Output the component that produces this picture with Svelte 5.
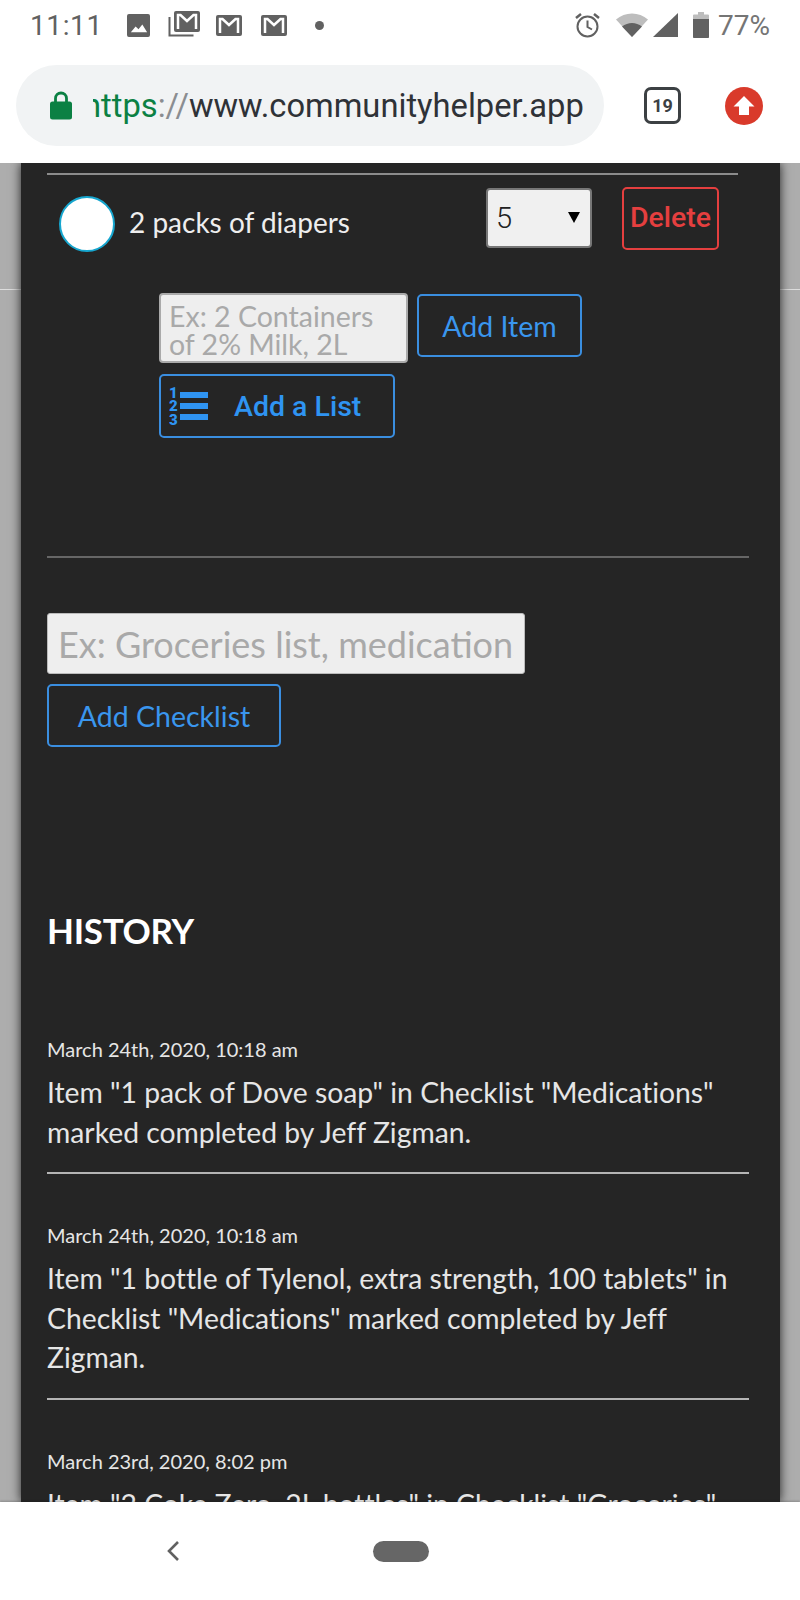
<script>
  const history = [
    { date: 'March 24th, 2020, 10:18 am', text: 'Item "1 pack of Dove soap" in Checklist "Medications" marked completed by Jeff Zigman.' },
    { date: 'March 24th, 2020, 10:18 am', text: 'Item "1 bottle of Tylenol, extra strength, 100 tablets" in Checklist "Medications" marked completed by Jeff Zigman.' },
    { date: 'March 23rd, 2020, 8:02 pm', text: 'Item "2 Coke Zero, 2L bottles" in Checklist "Groceries" marked completed by Jeff Zigman.' }
  ];
</script>

<div class="phone">
  <header class="chrome">
    <div class="status">
      <span class="time">11:11</span>
      <div class="notifs">
        <svg class="ic-photo" width="24" height="24" viewBox="0 0 24 24"><rect width="24" height="24" rx="2" fill="#616161"/><path d="M4 19l5-6 3 3 4-5 5 8z" fill="#fff"/></svg>
        <svg class="ic-stack" width="32" height="26" viewBox="0 0 32 26"><path d="M1.5 6v18.500h24" fill="none" stroke="#616161" stroke-width="2"/><rect x="6" y="0" width="26" height="21" rx="2" fill="#616161"/><path d="M10 18V4h2.500l6.500 6 6.500-6H28v14" fill="none" stroke="#fff" stroke-width="2.500"/></svg>
        <svg class="ic-mail" width="26" height="21" viewBox="0 0 26 21"><rect width="26" height="21" rx="2" fill="#616161"/><path d="M4 18V4h2.500l6.500 6 6.500-6H22v14" fill="none" stroke="#fff" stroke-width="2.500"/></svg>
        <svg class="ic-mail" width="26" height="21" viewBox="0 0 26 21"><rect width="26" height="21" rx="2" fill="#616161"/><path d="M4 18V4h2.500l6.500 6 6.500-6H22v14" fill="none" stroke="#fff" stroke-width="2.500"/></svg>
        <span class="dot"></span>
      </div>
      <div class="sys">
        <svg width="27" height="26" viewBox="0 0 27 26"><circle cx="13.500" cy="14.500" r="10" fill="none" stroke="#616161" stroke-width="2"/><path d="M13.500 8.500v6.500l4.500 2.500" fill="none" stroke="#616161" stroke-width="2"/><path d="M2 6l5-4M25 6l-5-4" stroke="#616161" stroke-width="2.500"/></svg>
        <svg class="wifi" width="32" height="24" viewBox="0 0 32 24"><path d="M0 6.500C9-1.500 23-1.500 32 6.500L16 24z" fill="#bdbdbd"/><path d="M6 13.500c6-4.800 14-4.800 20 0L16 24z" fill="#616161"/></svg>
        <svg width="25" height="24" viewBox="0 0 25 24"><path d="M25 0v24H0z" fill="#616161"/></svg>
        <svg class="batt" width="16" height="26" viewBox="0 0 16 26"><path d="M5 0h6v2.500h4a1 1 0 0 1 1 1V25a1 1 0 0 1-1 1H1a1 1 0 0 1-1-1V3.500a1 1 0 0 1 1-1h4z" fill="#bdbdbd"/><path d="M0 7h16v18a1 1 0 0 1-1 1H1a1 1 0 0 1-1-1z" fill="#616161"/></svg>
        <span class="pct">77%</span>
      </div>
    </div>
    <div class="toolbar">
      <div class="omnibox">
        <svg class="lock" width="22" height="29" viewBox="0 0 22 29"><path d="M5.500 13V7.500a5.500 5.500 0 0 1 11 0V13" fill="none" stroke="#0b8043" stroke-width="2.800"/><rect y="10.500" width="22" height="18" rx="2.500" fill="#0b8043"/></svg>
        <div class="url-clip"><span class="url"><span class="scheme">https</span><span class="sep">://</span>www.communityhelper.app</span></div>
      </div>
      <div class="tabs">19</div>
      <svg class="update" width="38" height="38" viewBox="0 0 38 38"><circle cx="19" cy="19" r="19" fill="#d93a2b"/><path d="M19 9l10.500 10.500H24V28H14v-8.500H8.500z" fill="#fff"/></svg>
    </div>
  </header>

  <main class="page">
    <div class="page-line"></div>
    <div class="panel">
      <hr class="rule-top" />
      <div class="item">
        <div class="item-label">
          <span class="circle"></span>
          <span class="item-name">2 packs of diapers</span>
        </div>
        <div class="qty">
          <select><option>5</option></select>
        </div>
        <button class="btn-delete">Delete</button>
      </div>

      <div class="add-item">
        <textarea rows="2" placeholder="Ex: 2 Containers of 2% Milk, 2L"></textarea>
        <button class="btn btn-item">Add Item</button>
      </div>
      <button class="btn btn-list">
        <svg width="39" height="44" viewBox="0 0 39 44">
          <text x="0" y="14" class="nums">1</text>
          <text x="0" y="27" class="nums">2</text>
          <text x="0" y="41" class="nums">3</text>
          <rect x="11" y="8" width="28" height="6" fill="#2f94f2"/>
          <rect x="11" y="19" width="28" height="6" fill="#2f94f2"/>
          <rect x="11" y="30" width="28" height="6" fill="#2f94f2"/>
        </svg>
        <span>Add a List</span>
      </button>

      <hr class="rule-mid" />

      <input class="check-input" placeholder="Ex: Groceries list, medications, etc." />
      <button class="btn btn-check">Add Checklist</button>

      <h2>HISTORY</h2>

      {#each history as h}
        <section class="entry">
          <div class="date">{h.date}</div>
          <p>{h.text}</p>
          <hr class="rule-entry" />
        </section>
      {/each}
    </div>
  </main>

  <footer class="nav">
    <svg width="16" height="22" viewBox="0 0 16 22"><path d="M12 2L3 11l9 9" fill="none" stroke="#616161" stroke-width="2.600"/></svg>
    <span class="pill"></span>
  </footer>
</div>

<style>
  :global(body) {
    margin: 0;
    background: #fff;
  }
  .phone {
    width: 800px;
    height: 1600px;
    display: flex;
    flex-direction: column;
    overflow: hidden;
    font-family: Lato, sans-serif;
    font-variant-ligatures: none;
  }

  .chrome {
    height: 163px;
    flex: none;
    background: #fff;
    position: relative;
    z-index: 2;
  }
  .status {
    height: 50px;
    display: flex;
    align-items: center;
    padding: 0 30px;
    color: #616161;
    font-family: Roboto, sans-serif;
  }
  .time {
    font-size: 28px;
    letter-spacing: 0.6px;
    width: 97px;
  }
  .notifs {
    display: flex;
    align-items: center;
    margin-left: 0;
  }
  .ic-photo { margin-left: 0; width: 23px; height: 23px; }
  .ic-stack { margin-left: 18px; margin-top: -3px; }
  .ic-mail { margin-left: 19px; }
  .ic-stack + .ic-mail { margin-left: 16px; }
  .dot {
    width: 9px;
    height: 9px;
    border-radius: 50%;
    background: #616161;
    margin-left: 28px;
  }
  .sys {
    margin-left: auto;
    display: flex;
    align-items: center;
  }
  .wifi { margin-left: 15px; }
  .wifi + svg { margin-left: 5px; }
  .batt { margin-left: 15px; }
  .pct {
    font-size: 28px;
    margin-left: 9px;
    color: #757575;
  }

  .toolbar {
    display: flex;
    align-items: center;
    padding: 15px 0 0 16px;
  }
  .omnibox {
    width: 588px;
    height: 81px;
    border-radius: 41px;
    background: #f1f3f4;
    display: flex;
    align-items: center;
    padding-left: 34px;
    box-sizing: border-box;
  }
  .url-clip {
    width: 505px;
    margin-left: 21px;
    overflow: hidden;
    white-space: nowrap;
  }
  .url {
    display: block;
    margin-left: -10px;
    font-family: Roboto, sans-serif;
    font-size: 32.7px;
    color: #2f3237;
  }
  .scheme { color: #0b8043; }
  .sep { color: #8a8d91; }
  .tabs {
    width: 37px;
    height: 37px;
    box-sizing: border-box;
    margin-left: 40px;
    border: 3px solid #3c4043;
    border-radius: 7px;
    color: #3c4043;
    font: 700 18px/31px Roboto, sans-serif;
    text-align: center;
  }
  .update { margin-left: 44px; }

  .page {
    flex: 1;
    min-height: 0;
    background: #adadad;
    position: relative;
    overflow: hidden;
  }
  .page-line {
    position: absolute;
    left: 0;
    right: 0;
    top: 126px;
    height: 1px;
    background: #ddd;
  }
  .panel {
    position: relative;
    margin: 0 20px 0 21px;
    height: 100%;
    box-sizing: border-box;
    padding: 10px 30px 0 26px;
    background: #252525;
    box-shadow: 0 0 10px #222;
    overflow: hidden;
  }

  hr {
    margin: 0;
    border: 0;
    height: 2px;
  }
  .rule-top {
    background: #8c8c8c;
    width: 691px;
  }
  .item {
    display: flex;
    align-items: flex-start;
    margin-top: 12px;
    height: 92px;
    position: relative;
  }
  .item-label {
    display: flex;
    align-items: center;
    margin: 9px 0 0 12px;
    width: 427px;
  }
  .circle {
    width: 56px;
    height: 56px;
    box-sizing: border-box;
    border-radius: 50%;
    background: #fff;
    border: 2px solid #16a6cf;
    flex: none;
  }
  .item-name {
    margin-left: 14px;
    padding-bottom: 4px;
    font-size: 28px;
    color: #eee;
  }
  .qty {
    position: relative;
    margin-top: 1px;
  }
  .qty::after {
    content: '';
    position: absolute;
    right: 12px;
    top: 24px;
    border: 6px solid transparent;
    border-top: 11px solid #000;
    border-bottom: 0;
  }
  select {
    appearance: none;
    display: block;
    width: 106px;
    height: 60px;
    box-sizing: border-box;
    background: #f0f0f0;
    border: 2px solid #777;
    border-radius: 4px;
    padding: 0 8px;
    font: 300 29px Roboto, sans-serif;
    color: #222;
  }
  .btn-delete {
    width: 97px;
    height: 63px;
    margin-left: 30px;
    padding: 0 0 2px;
    background: transparent;
    border: 2px solid #e53f3f;
    border-radius: 5px;
    color: #e53f3f;
    font: 500 28.5px Roboto, sans-serif;
  }

  .btn {
    display: block;
    box-sizing: border-box;
    background: transparent;
    border: 2px solid #3a8ee0;
    border-radius: 5px;
    color: #3a96ee;
    font: 400 28.5px Lato, sans-serif;
    font-variant-ligatures: none;
    padding: 0;
  }
  .add-item {
    display: flex;
    align-items: flex-start;
    gap: 9px;
    margin: 14px 0 0 112px;
  }
  textarea {
    display: block;
    width: 249px;
    height: 70px;
    box-sizing: border-box;
    resize: none;
    overflow: hidden;
    background: #eee;
    border: 2px solid #aaa;
    border-radius: 4px;
    padding: 7px 8px;
    font: 28.5px/28px Lato, sans-serif;
  }
  textarea::placeholder,
  .check-input::placeholder {
    color: #a9a9a9;
    opacity: 1;
  }
  .btn-item {
    width: 165px;
    height: 63px;
    margin-top: 1px;
  }
  .btn-list {
    display: flex;
    align-items: center;
    width: 236px;
    height: 64px;
    margin: 11px 0 0 112px;
    padding-left: 8px;
    font: 500 28.5px Roboto, sans-serif;
    color: #2f94f2;
  }
  .btn-list span {
    margin-left: 26px;
  }
  .nums {
    font: 900 15px Roboto, sans-serif;
    fill: #2f94f2;
  }

  .rule-mid {
    background: #666;
    width: 702px;
    margin-top: 118px;
  }
  .check-input {
    display: block;
    width: 478px;
    height: 61px;
    box-sizing: border-box;
    margin-top: 55px;
    background: #eee;
    border: 1px solid #bbb;
    border-radius: 3px;
    padding: 0 10px;
    font: 36px Lato, sans-serif;
  }
  .btn-check {
    width: 234px;
    height: 63px;
    margin-top: 10px;
  }

  h2 {
    margin: 162px 0 0;
    font-size: 35px;
    line-height: 42px;
    font-weight: 700;
    color: #fff;
    letter-spacing: -0.3px;
  }
  .entry {
    width: 702px;
    color: #e6e6e6;
  }
  .entry:first-of-type {
    margin-top: 37px;
  }
  .date {
    font-size: 20px;
    line-height: 24px;
    padding-top: 49px;
  }
  .entry p {
    margin: 12px 0 20px;
    font-size: 28.3px;
    line-height: 39.500px;
  }
  .rule-entry {
    background: #b5b5b5;
  }

  .nav {
    height: 98px;
    flex: none;
    background: #fff;
    position: relative;
    z-index: 2;
    box-shadow: 0 -1px 2px rgba(0, 0, 0, 0.2);
    display: flex;
    align-items: center;
    padding-left: 166px;
    padding-bottom: 0;
  }
  .pill {
    width: 56px;
    height: 21px;
    border-radius: 11px;
    background: #666;
    margin-left: 191px;
  }
</style>
